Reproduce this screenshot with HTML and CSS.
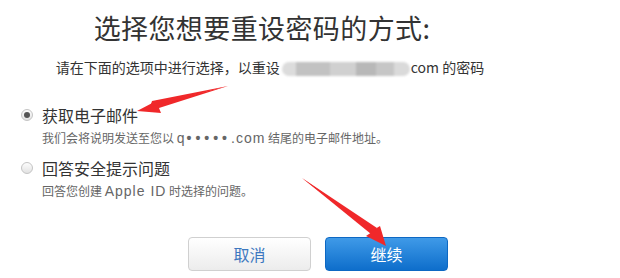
FILE: index.html
```html
<!DOCTYPE html>
<html lang="zh-CN">
<head>
<meta charset="utf-8">
<title>重设密码</title>
<link rel="stylesheet" href="styles.css">
</head>
<body>
<div class="page">
  <div class="header">
    <h1 class="title">选择您想要重设密码的方式:</h1>
    <p class="subtitle">请在下面的选项中进行选择，以重设<span class="blur"><span class="b1"></span><span class="b2"></span><span class="b3"></span><span class="b4"></span><span class="b5"></span><span class="b6"></span></span>com 的密码</p>
  </div>
  <div class="options">
    <div class="option">
      <span class="radio checked"></span>
      <div class="opt-text">
        <div class="opt-label">获取电子邮件</div>
        <div class="opt-desc">我们会将说明发送至您以 <span class="latin">q<span class="dots">•••••</span>.com</span> 结尾的电子邮件地址。</div>
      </div>
    </div>
    <div class="option second">
      <span class="radio"></span>
      <div class="opt-text">
        <div class="opt-label">回答安全提示问题</div>
        <div class="opt-desc">回答您创建 <span class="latin">Apple ID</span> 时选择的问题。</div>
      </div>
    </div>
  </div>
  <div class="actions">
    <button class="btn cancel">取消</button>
    <button class="btn primary">继续</button>
  </div>
  <svg class="arrows" width="620" height="278" viewBox="0 0 620 278">
    <path d="M228 86 L156 104 L158 100 L137 111 L161 113 L159 108 Z" fill="#f0282a"/>
    <path d="M228 86 L152 101 L150 107 Z" fill="#f0282a"/>
    <path d="M302 178 L372 232 L366 236 L386 246 L380 226 L375 229 Z" fill="#f0282a"/>
    <path d="M302 178 L377 228 L371 234 Z" fill="#f0282a"/>
  </svg>
</div>
</body>
</html>
```

FILE: styles.css
```css
* { box-sizing: border-box; }
html, body { margin: 0; padding: 0; background: #fff; }
body {
  font-family: "Noto Sans CJK SC", "Noto Sans", "Liberation Sans", sans-serif;
  color: #333;
}
.latin { font-family: "Liberation Sans", "Noto Sans CJK SC", sans-serif; font-size: 14px; letter-spacing: 1px; }
.dots { font-weight: 700; letter-spacing: 4px; margin-left: 1px; }
.page {
  position: relative;
  width: 620px;
  height: 278px;
  overflow: hidden;
}
.header {
  width: 540px;
  text-align: center;
  padding-top: 11px;
}
.title {
  margin: 0 0 0 -16px;
  font-size: 27px;
  font-weight: 400;
  letter-spacing: 0.4px;
  line-height: 34px;
  color: #333;
}
.subtitle {
  margin: 12px 0 0 0;
  font-size: 14px;
  line-height: 20px;
  color: #333;
}
.blur {
  display: inline-flex;
  vertical-align: -3px;
  height: 14px;
  width: 128px;
  margin: 0 1px 0 2px;
  filter: blur(1.2px);
}
.blur span { display: block; height: 14px; }
.b1 { width: 14px; background: #dcdcdc; border-radius: 7px 0 0 7px; }
.b2 { width: 34px; background: #c2c2c2; }
.b3 { width: 26px; background: #d0d0d0; }
.b4 { width: 20px; background: #b8b8b8; }
.b5 { width: 18px; background: #c6c6c6; }
.b6 { width: 16px; background: #dadada; border-radius: 0 7px 7px 0; }
.options {
  padding: 28px 0 0 21px;
}
.option {
  display: flex;
  align-items: flex-start;
  gap: 9px;
}
.option.second { margin-top: 12px; }
.radio {
  width: 12px;
  height: 12px;
  margin-top: 4px;
  border-radius: 50%;
  border: 1px solid #c4c4c4;
  background: linear-gradient(#fdfdfd, #e2e2e2);
  position: relative;
  flex: none;
}
.radio.checked::after {
  content: "";
  position: absolute;
  left: 2px;
  top: 2px;
  width: 6px;
  height: 6px;
  border-radius: 50%;
  background: #555;
}
.opt-label {
  font-size: 16px;
  line-height: 20px;
  color: #333;
}
.opt-desc {
  margin-top: 5px;
  font-size: 12px;
  line-height: 16px;
  color: #666;
}
.actions {
  display: flex;
  gap: 14px;
  padding: 38px 0 0 188px;
}
.btn {
  width: 123px;
  height: 34px;
  border-radius: 4px;
  font-family: inherit;
  font-size: 16px;
  line-height: 1;
  padding: 0;
  cursor: pointer;
}
.cancel {
  color: #3d78c0;
  border: 1px solid #d0d0d0;
  background: linear-gradient(#ffffff, #ececec);
}
.primary {
  color: #fff;
  border: 1px solid #0d68c3;
  background: linear-gradient(#3f9ae8, #0e6ecb);
}
.arrows {
  position: absolute;
  left: 0;
  top: 0;
  pointer-events: none;
}
```
